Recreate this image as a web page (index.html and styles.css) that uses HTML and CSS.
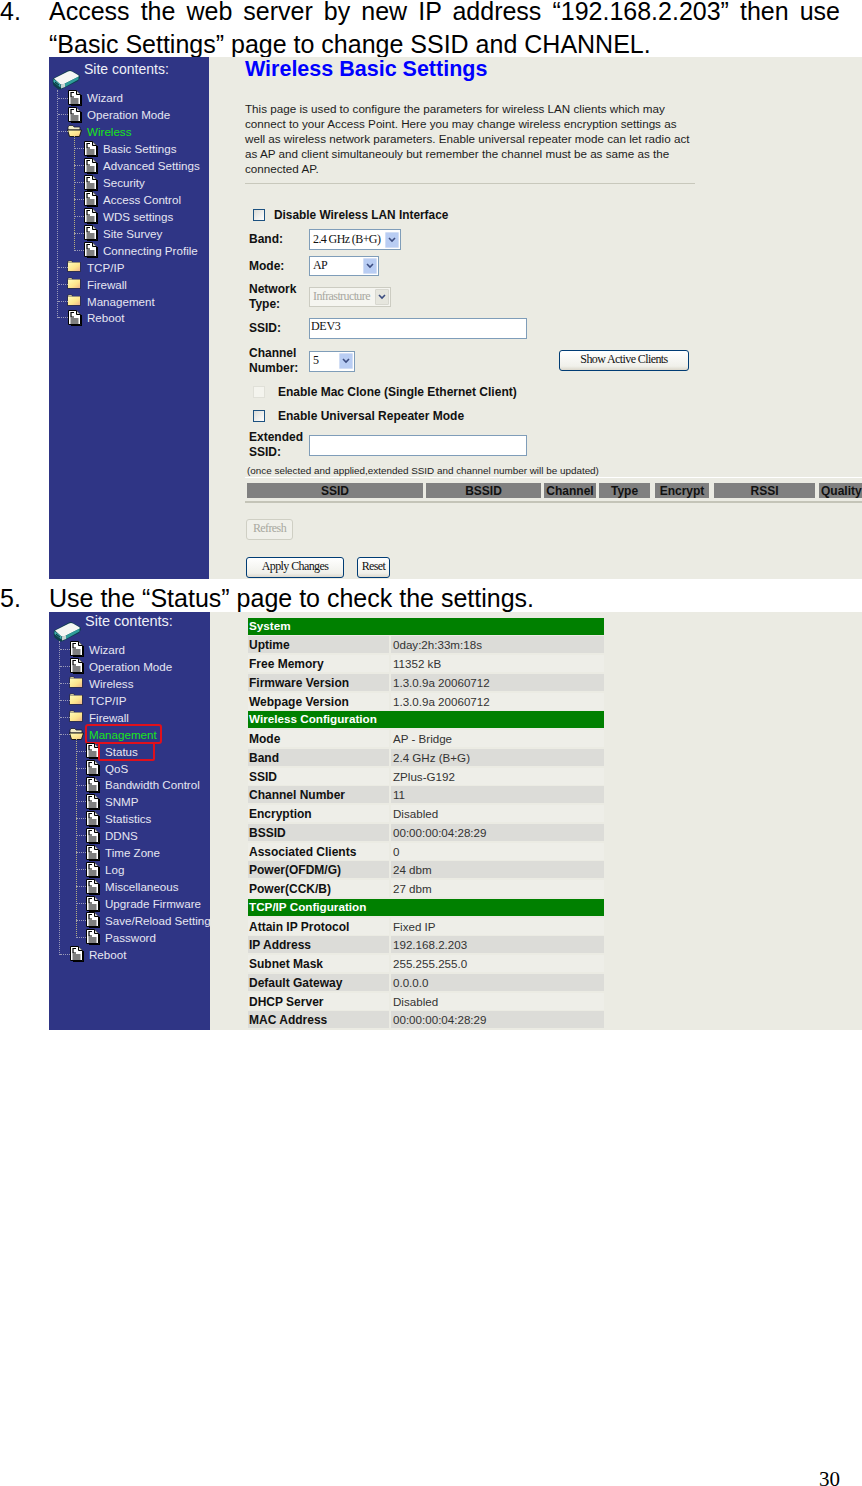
FILE: index.html
```html
<!DOCTYPE html>
<html lang="en">
<head>
<meta charset="utf-8">
<title>Wireless settings</title>
<link rel="stylesheet" href="styles.css">
</head>
<body>
<svg class="defs" width="0" height="0" aria-hidden="true">
  <defs>
    <linearGradient id="fold" x1="0" y1="0" x2="1" y2="1">
      <stop offset="0" stop-color="#fffbb8"/>
      <stop offset=".6" stop-color="#fde48c"/>
      <stop offset="1" stop-color="#eeb48c"/>
    </linearGradient>
  </defs>
  <symbol id="doc" viewBox="0 0 14 16">
    <path d="M3 15.500h10.500V5" fill="none" stroke="#000" stroke-width="1.500"/>
    <path d="M.5.500h8l4 4v10H.5z" fill="#fff" stroke="#000"/>
    <path d="M8.500.500v4h4" fill="#cfcfcf" stroke="#000"/>
    <path d="M6 2.500H3v4.500h3M2.500 9h8M2.500 11h8M2.500 13h8" fill="none" stroke="#000" stroke-width="1.200"/>
  </symbol>
  <symbol id="folder" viewBox="0 0 14 12">
    <path d="M0 2l1-1.500h4L6 2h8v10H0z" fill="#2f2f50"/>
    <path d="M1 2.500h12V11H1z" fill="url(#fold)"/>
    <path d="M1.500 1.300h3l.6.900h-4z" fill="#fff3a8"/>
  </symbol>
  <symbol id="folder-open" viewBox="0 0 15 12">
    <path d="M1 2l1-1.500h4L7 2h6v3H1z" fill="#f2ecc8" stroke="#1a1a2a" stroke-width=".8"/>
    <path d="M.5 5H14.500L12.500 11.500H2.500z" fill="url(#fold)" stroke="#1a1a1a"/>
  </symbol>
  <symbol id="router" viewBox="0 0 29 21">
    <path d="M1 9.500 15 2c2-1.200 3.500-1.200 5 0l7 4c1.200 1 1.200 2 .5 3.500L26 12 10 20c-1.500.8-3 .8-4 0l-4-3C.8 16 .3 11 1 9.500z" fill="#0d3f4c"/>
    <path d="M2 9.500 16 2.500c1.500-.8 2.500-.8 4 0l6 3.500c1 .7 1 1.500 0 2L12 15c-1.500.8-2.500.8-4 0z" fill="#f4f6f4"/>
    <path d="M13 14.500 26.500 7.500v3L13 18z" fill="#2f9c9a"/>
    <path d="M1.500 10l7 5.500v3l-7-5.500z" fill="#3fb0ac"/>
    <path d="M3 12.500l4 3v1.200l-4-3z" fill="#0b2f3c"/>
    <path d="M9 15.500l4-1v3.500l-4 1.500z" fill="#c8d4d2"/>
  </symbol>
  <symbol id="arrow" viewBox="0 0 8 6">
    <path d="M1 1l3 3 3-3" fill="none" stroke="#3c4d80" stroke-width="1.600"/>
  </symbol>
</svg>

<main class="page">
  <section class="step step-first">
    <span class="step-no">4.</span>
    <p class="step-text">Access the web server by new IP address “192.168.2.203” then use “Basic Settings” page to change SSID and CHANNEL.</p>
  </section>

  <div class="shot shot-basic">
    <nav class="side">
      <div class="side-head"><svg class="logo"><use href="#router"/></svg><span>Site contents:</span></div>
      <ul class="tree">
        <li class="node"><svg class="ico-doc"><use href="#doc"/></svg><span>Wizard</span></li>
        <li class="node"><svg class="ico-doc"><use href="#doc"/></svg><span>Operation Mode</span></li>
        <li class="node"><svg class="ico-open"><use href="#folder-open"/></svg><span class="on">Wireless</span></li>
        <li>
          <ul class="sub">
            <li class="node"><svg class="ico-doc"><use href="#doc"/></svg><span>Basic Settings</span></li>
            <li class="node"><svg class="ico-doc"><use href="#doc"/></svg><span>Advanced Settings</span></li>
            <li class="node"><svg class="ico-doc"><use href="#doc"/></svg><span>Security</span></li>
            <li class="node"><svg class="ico-doc"><use href="#doc"/></svg><span>Access Control</span></li>
            <li class="node"><svg class="ico-doc"><use href="#doc"/></svg><span>WDS settings</span></li>
            <li class="node"><svg class="ico-doc"><use href="#doc"/></svg><span>Site Survey</span></li>
            <li class="node"><svg class="ico-doc"><use href="#doc"/></svg><span>Connecting Profile</span></li>
          </ul>
        </li>
        <li class="node"><svg class="ico-folder"><use href="#folder"/></svg><span>TCP/IP</span></li>
        <li class="node"><svg class="ico-folder"><use href="#folder"/></svg><span>Firewall</span></li>
        <li class="node"><svg class="ico-folder"><use href="#folder"/></svg><span>Management</span></li>
        <li class="node"><svg class="ico-doc"><use href="#doc"/></svg><span>Reboot</span></li>
      </ul>
    </nav>

    <div class="content">
      <h1 class="title">Wireless Basic Settings</h1>
      <p class="intro">This page is used to configure the parameters for wireless LAN clients which may<br>connect to your Access Point. Here you may change wireless encryption settings as<br>well as wireless network parameters. Enable universal repeater mode can let radio act<br>as AP and client simultaneouly but remember the channel must be as same as the<br>connected AP.</p>
      <div class="rule"></div>

      <div class="check check-disable"><span class="box"></span><b class="check-label-a">Disable Wireless LAN Interface</b></div>

      <div class="row row-band"><b class="lbl">Band:</b><span class="select w-band"><span>2.4 GHz (B+G)</span><i class="drop"><svg><use href="#arrow"/></svg></i></span></div>
      <div class="row row-mode"><b class="lbl">Mode:</b><span class="select w-mode"><span>AP</span><i class="drop"><svg><use href="#arrow"/></svg></i></span></div>
      <div class="row row-net"><b class="lbl">Network<br>Type:</b><span class="select select-off w-net"><span>Infrastructure</span><i class="drop"><svg><use href="#arrow"/></svg></i></span></div>
      <div class="row row-ssid"><b class="lbl">SSID:</b><span class="input">DEV3</span></div>
      <div class="row row-chan"><b class="lbl">Channel<br>Number:</b><span class="select w-chan"><span>5</span><i class="drop"><svg><use href="#arrow"/></svg></i></span><span class="btn btn-show">Show Active Clients</span></div>

      <div class="check check-mac"><span class="box box-off"></span><b class="check-label-b">Enable Mac Clone (Single Ethernet Client)</b></div>
      <div class="check check-rep"><span class="box"></span><b class="check-label-b">Enable Universal Repeater Mode</b></div>

      <div class="row row-ext"><b class="lbl">Extended<br>SSID:</b><span class="input"></span></div>
      <p class="note">(once selected and applied,extended SSID and channel number will be updated)</p>

      <div class="survey">
        <b class="c-ssid">SSID</b><b class="c-bssid">BSSID</b><b class="c-chan">Channel</b><b class="c-type">Type</b><b class="c-enc">Encrypt</b><b class="c-rssi">RSSI</b><b class="c-qual">Quality</b>
      </div>

      <span class="btn btn-off btn-refresh">Refresh</span>
      <div class="actions"><span class="btn btn-apply">Apply Changes</span><span class="btn btn-reset">Reset</span></div>
    </div>
  </div>

  <section class="step step-second">
    <span class="step-no">5.</span>
    <p class="step-text">Use the “Status” page to check the settings.</p>
  </section>

  <div class="shot shot-status">
    <nav class="side">
      <div class="side-head"><svg class="logo"><use href="#router"/></svg><span>Site contents:</span></div>
      <ul class="tree">
        <li class="node"><svg class="ico-doc"><use href="#doc"/></svg><span>Wizard</span></li>
        <li class="node"><svg class="ico-doc"><use href="#doc"/></svg><span>Operation Mode</span></li>
        <li class="node"><svg class="ico-folder"><use href="#folder"/></svg><span>Wireless</span></li>
        <li class="node"><svg class="ico-folder"><use href="#folder"/></svg><span>TCP/IP</span></li>
        <li class="node"><svg class="ico-folder"><use href="#folder"/></svg><span>Firewall</span></li>
        <li class="node"><svg class="ico-open"><use href="#folder-open"/></svg><span class="on mark-mgmt">Management</span></li>
        <li>
          <ul class="sub">
            <li class="node"><svg class="ico-doc"><use href="#doc"/></svg><span class="mark-status">Status</span></li>
            <li class="node"><svg class="ico-doc"><use href="#doc"/></svg><span>QoS</span></li>
            <li class="node"><svg class="ico-doc"><use href="#doc"/></svg><span>Bandwidth Control</span></li>
            <li class="node"><svg class="ico-doc"><use href="#doc"/></svg><span>SNMP</span></li>
            <li class="node"><svg class="ico-doc"><use href="#doc"/></svg><span>Statistics</span></li>
            <li class="node"><svg class="ico-doc"><use href="#doc"/></svg><span>DDNS</span></li>
            <li class="node"><svg class="ico-doc"><use href="#doc"/></svg><span>Time Zone</span></li>
            <li class="node"><svg class="ico-doc"><use href="#doc"/></svg><span>Log</span></li>
            <li class="node"><svg class="ico-doc"><use href="#doc"/></svg><span>Miscellaneous</span></li>
            <li class="node"><svg class="ico-doc"><use href="#doc"/></svg><span>Upgrade Firmware</span></li>
            <li class="node"><svg class="ico-doc"><use href="#doc"/></svg><span>Save/Reload Setting</span></li>
            <li class="node"><svg class="ico-doc"><use href="#doc"/></svg><span>Password</span></li>
          </ul>
        </li>
        <li class="node"><svg class="ico-doc"><use href="#doc"/></svg><span>Reboot</span></li>
      </ul>
    </nav>

    <div class="content">
      <div class="status">
        <div class="st-head">System</div>
        <div class="st-row"><b>Uptime</b><span>0day:2h:33m:18s</span></div>
        <div class="st-row"><b>Free Memory</b><span>11352 kB</span></div>
        <div class="st-row"><b>Firmware Version</b><span>1.3.0.9a 20060712</span></div>
        <div class="st-row"><b>Webpage Version</b><span>1.3.0.9a 20060712</span></div>
        <div class="st-head">Wireless Configuration</div>
        <div class="st-row"><b>Mode</b><span>AP - Bridge</span></div>
        <div class="st-row"><b>Band</b><span>2.4 GHz (B+G)</span></div>
        <div class="st-row"><b>SSID</b><span>ZPlus-G192</span></div>
        <div class="st-row"><b>Channel Number</b><span>11</span></div>
        <div class="st-row"><b>Encryption</b><span>Disabled</span></div>
        <div class="st-row"><b>BSSID</b><span>00:00:00:04:28:29</span></div>
        <div class="st-row"><b>Associated Clients</b><span>0</span></div>
        <div class="st-row"><b>Power(OFDM/G)</b><span>24 dbm</span></div>
        <div class="st-row"><b>Power(CCK/B)</b><span>27 dbm</span></div>
        <div class="st-head">TCP/IP Configuration</div>
        <div class="st-row"><b>Attain IP Protocol</b><span>Fixed IP</span></div>
        <div class="st-row"><b>IP Address</b><span>192.168.2.203</span></div>
        <div class="st-row"><b>Subnet Mask</b><span>255.255.255.0</span></div>
        <div class="st-row"><b>Default Gateway</b><span>0.0.0.0</span></div>
        <div class="st-row"><b>DHCP Server</b><span>Disabled</span></div>
        <div class="st-row"><b>MAC Address</b><span>00:00:00:04:28:29</span></div>
      </div>
    </div>
  </div>

  <footer class="page-no">30</footer>
</main>
</body>
</html>
```
FILE: styles.css
```css
* { box-sizing: border-box; }
html, body { margin: 0; padding: 0; background: #fff; }
body { width: 862px; height: 1486px; overflow: hidden; font-family: "Liberation Sans", Arial, sans-serif; }
.defs { display: block; height: 0; }
ul { list-style: none; margin: 0; padding: 0; }
p, h1 { margin: 0; }

.page { display: flex; flex-direction: column; height: 1486px; }

/* numbered steps */
.step { display: grid; grid-template-columns: 49px 791px; flex: none; font-size: 25px; line-height: 33px; color: #000; }
.step-first { height: 62.500px; margin-top: -5.500px; }
.step-second { height: 33px; padding-top: 2.500px; }
.step-text { text-align: justify; }

/* screenshots */
.shot { display: flex; flex: none; margin-left: 49px; background: #ebebe3; overflow: hidden; }
.shot-basic { height: 522px; }
.shot-status { height: 418px; }

/* sidebar */
.side { flex: none; width: 160px; background: #2f3585; color: #e6e6f2; font-size: 11.600px; }
.shot-status .side { width: 161px; }
.side-head { position: relative; height: 32.500px; padding: 3px 0 0 35px; font-size: 14px; line-height: 18px; color: #eef0f8; }
.shot-status .side-head { height: 29px; padding: 0 0 0 36px; font-size: 14.500px; }
.logo { position: absolute; left: 3px; top: 12px; width: 29px; height: 21px; }
.shot-status .logo { left: 4px; top: 9px; }

.tree { position: relative; padding-left: 19px; }
.shot-status .tree { padding-left: 21px; }
.tree::before { content: ""; position: absolute; left: 8px; top: 0; bottom: 8px; border-left: 1px dotted #9a9ab8; }
.shot-status .tree::before { left: 10px; }
.node { position: relative; display: flex; align-items: center; height: 16.930px; line-height: 17px; white-space: nowrap; }
.shot-status .node { height: 16.950px; }
.node::before { content: ""; position: absolute; left: -10px; top: 8px; width: 10px; border-top: 1px dotted #9a9ab8; }
.sub { position: relative; padding-left: 16px; }
.sub::before { content: ""; position: absolute; left: 6px; top: -4px; bottom: 8px; border-left: 1px dotted #b8b080; }
.ico-doc { flex: none; width: 14px; height: 16px; margin-right: 5px; }
.ico-folder { flex: none; width: 14px; height: 12px; margin: -2px 6px 0 -1px; }
.ico-open { flex: none; width: 15px; height: 12px; margin: -1px 5px 0 -1px; }
.on { color: #19e619; }

.mark-mgmt, .mark-status { position: relative; }
.mark-mgmt::after { content: ""; position: absolute; left: -4px; right: -5px; top: -2px; bottom: -1px; border: 2.500px solid #e0101c; border-radius: 3px; }
.mark-status::after { content: ""; position: absolute; left: -7px; width: 53px; top: -1px; bottom: -1px; border: 2.500px solid #e0101c; border-radius: 2px; }

/* settings form */
.content { flex: 1; min-width: 0; padding-left: 36px; }
.title { font-size: 21.500px; line-height: 24px; font-weight: bold; color: #0000ff; white-space: nowrap; }
.intro { margin-top: 20px; font-size: 11.660px; line-height: 15px; color: #1c1c1c; white-space: nowrap; }
.rule { width: 450px; margin-top: 7px; border-top: 1px solid #c8c8bc; }
.row { display: flex; align-items: center; margin-left: 4px; }
.lbl { flex: none; width: 60px; font-size: 12px; line-height: 15px; color: #111; }
.row-band { height: 20px; margin-top: 6.500px; }
.row-mode { height: 20px; margin-top: 6.500px; }
.row-net { height: 30px; margin-top: 6px; }
.row-ssid { height: 21px; margin-top: 6px; }
.row-chan { height: 30px; margin-top: 7px; width: 440px; }
.row-ext { height: 30px; margin-top: 6px; }

.check { display: flex; align-items: center; height: 16px; margin-left: 8px; font-size: 12px; color: #111; }
.check-disable { margin-top: 23px; }
.check-mac { margin-top: 8px; }
.check-rep { margin-top: 8px; }
.box { flex: none; width: 12px; height: 12px; border: 1px solid #1c5180; background: linear-gradient(135deg, #dcdcd7, #fff); }
.box-off { border-color: #e0e0d8; background: #f4f4ee; }
.check-label-a { margin-left: 9px; font-size: 11.850px; }
.check-label-b { margin-left: 13px; }

.select { display: flex; justify-content: space-between; align-items: center; height: 20px; padding: 0 1px 0 3px; border: 1px solid #7f9db9; background: #fff; font: 12px/16px "Liberation Serif", serif; letter-spacing: -.6px; color: #111; }
.select > span { padding-bottom: 2px; }
.drop { display: flex; align-items: center; justify-content: center; width: 14px; height: 16px; background: #b9cdf3; border: 1px solid #d2def5; border-radius: 1px; }
.drop svg { width: 8px; height: 6px; }
.w-band { width: 92px; height: 21px; }
.w-mode { width: 70px; }
.w-net { width: 82px; }
.w-chan { width: 46px; height: 21px; }
.select-off { border-color: #ccccc2; background: #f5f5f0; color: #a8a8a0; }
.select-off .drop { background: #e6e6de; border-color: #d8d8d0; }
.input { display: block; width: 218px; height: 21px; padding: 0 1px; border: 1px solid #7f9db9; background: #fff; font: 12px/15px "Liberation Serif", serif; letter-spacing: -.3px; color: #111; }

.btn { display: flex; align-items: center; justify-content: center; height: 21px; padding-bottom: 3px; border: 1px solid #003c74; border-radius: 3px; background: linear-gradient(#fff, #f0f0ea 80%, #dcd8cc); font: 12px/16px "Liberation Serif", serif; letter-spacing: -.6px; color: #111; white-space: nowrap; }
.btn-show { width: 130px; margin-left: auto; margin-top: -1px; }
.btn-off { border-color: #cfcfc4; background: #f0f0ea; color: #a8a8a0; }
.btn-refresh { width: 47px; margin: 16px 0 0 1px; }
.actions { display: flex; gap: 13px; margin: 17px 0 0 1px; }
.btn-apply { width: 98px; }
.btn-reset { width: 33px; }

.note { margin: 4px 0 0 2px; font-size: 9.900px; line-height: 14px; color: #1c1c1c; white-space: nowrap; }

.survey { display: flex; width: 640px; height: 26px; margin-top: -1px; padding: 5px 0 3px 2px; border-top: 1px solid #fff; border-bottom: 2px solid #c4c4b8; font-size: 12px; line-height: 16px; }
.survey b { flex: none; background: #808080; color: #111; text-align: center; white-space: nowrap; }
.c-ssid { width: 176px; margin-right: 3px; }
.c-bssid { width: 115px; margin-right: 3px; }
.c-chan { width: 52px; margin-right: 3px; }
.c-type { width: 51px; margin-right: 5px; }
.c-enc { width: 54px; margin-right: 5px; }
.c-rssi { width: 101px; margin-right: 4px; }
.survey .c-qual { width: 60px; text-align: left; padding-left: 2px; }

/* status table */
.shot-status .content { padding: 5.500px 0 0 38px; }
.status { display: grid; width: 356px; row-gap: 1.750px; font-size: 12px; line-height: 17px; }
.st-head { height: 17px; padding-left: 1px; background: #008000; color: #fff; font-weight: bold; font-size: 11.700px; line-height: 16px; }
.st-row { display: grid; grid-template-columns: 141px 213px; column-gap: 2px; height: 17px; }
.st-row b { padding: 1px 0 0 1px; line-height: 16px; color: #111; white-space: nowrap; }
.st-row span { padding-left: 2px; color: #333; font-size: 11.600px; }
.st-row b, .st-row span { background: #eeeee8; }
.st-row:nth-child(even) b, .st-row:nth-child(even) span { background: #dcdcd8; }

.page-no { flex: none; margin-top: auto; padding: 0 22px 0 0; font: 21px/24px "Liberation Serif", serif; text-align: right; color: #000; height: 19px; }
```
